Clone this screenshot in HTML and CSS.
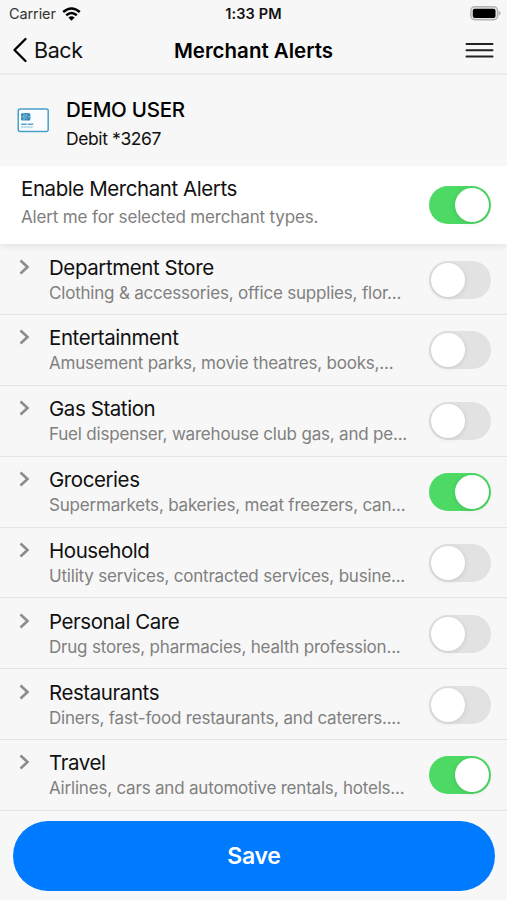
FILE: index.html
```html
<!DOCTYPE html>
<html lang="en">
<head>
    <meta charset="UTF-8">
    <meta name="viewport" content="width=device-width, initial-scale=1.0">
    <title>Merchant Alerts</title>
    <link rel="stylesheet" href="styles.css">
</head>
<body>
    <header>
        <div class="status-bar">
            <div class="carrier">
                <span>Carrier</span>
                <svg width="19" height="14" viewBox="0 0 19 14" fill="none" stroke="#000" stroke-width="2.5">
                    <path d="M1.2 5 Q9.5 -2 17.8 5"/>
                    <path d="M4.2 8.3 Q9.5 3.8 14.8 8.3"/>
                    <path d="M9.5 13.7 L6.4 10.6 Q9.5 8 12.6 10.6 Z" fill="#000" stroke="none"/>
                </svg>
            </div>
            <div class="time">1:33 PM</div>
            <svg class="battery" width="31" height="15" viewBox="0 0 31 15">
                <rect x="0.8" y="0.8" width="26.9" height="13" rx="4" fill="#e4e4e4" stroke="#b4b4b4" stroke-width="1.4"/>
                <rect x="2.8" y="2.7" width="22.7" height="9.2" rx="2" fill="#000"/>
                <path d="M28.8 5 Q30.6 5.6 30.6 7.3 Q30.6 9 28.8 9.6 Z" fill="#b4b4b4"/>
            </svg>
        </div>
        <nav class="nav-bar">
            <a class="back">
                <svg width="15" height="26" viewBox="0 0 15 26" fill="none" stroke="#000" stroke-width="2.3" stroke-linecap="round" stroke-linejoin="round">
                    <path d="M13.5 2 L2.5 13 L13.5 24"/>
                </svg>
                <span>Back</span>
            </a>
            <h1>Merchant Alerts</h1>
            <svg class="menu" width="29" height="16" viewBox="0 0 29 16" stroke="#222" stroke-width="2" stroke-linecap="round">
                <path d="M1.5 2 H27.5 M1.5 8.2 H27.5 M1.5 14.4 H27.5"/>
            </svg>
        </nav>
    </header>

    <section class="account">
        <svg width="32" height="25" viewBox="0 0 32 25">
            <rect x="1.2" y="1" width="30" height="22.6" rx="2" fill="#fafcfd" stroke="#4c9fc8" stroke-width="1.5"/>
            <rect x="4" y="5" width="9.4" height="7.6" rx="1.6" fill="#348dba"/>
            <path d="M4 8.8 H6.8 M10.8 8.8 H13.4 M7 5 V12.6 M10.4 6.8 H9 V11" fill="none" stroke="#a9d3e7" stroke-width="0.7"/>
            <path d="M4.2 16.2 H16.4" stroke="#5aa3c6" stroke-width="1.5" stroke-dasharray="5.5 1"/>
            <path d="M4.2 19 H16.4" stroke="#72b5d3" stroke-width="1.1" stroke-dasharray="2.4 0.6"/>
        </svg>
        <div>
            <h2>DEMO USER</h2>
            <p>Debit *3267</p>
        </div>
    </section>

    <section class="enable">
        <div>
            <h3>Enable Merchant Alerts</h3>
            <p>Alert me for selected merchant types.</p>
        </div>
        <span class="toggle on"></span>
    </section>

    <ul class="merchants">
        <li>
            <svg class="arrow" viewBox="0 0 11 16"><path d="M1.5 1.5 L8.5 8 L1.5 14.5"/></svg>
            <div class="info">
                <h3>Department Store</h3>
                <p>Clothing &amp; accessories, office supplies, flor...</p>
            </div>
            <span class="toggle"></span>
        </li>
        <li>
            <svg class="arrow" viewBox="0 0 11 16"><path d="M1.5 1.5 L8.5 8 L1.5 14.5"/></svg>
            <div class="info">
                <h3>Entertainment</h3>
                <p>Amusement parks, movie theatres, books,...</p>
            </div>
            <span class="toggle"></span>
        </li>
        <li>
            <svg class="arrow" viewBox="0 0 11 16"><path d="M1.5 1.5 L8.5 8 L1.5 14.5"/></svg>
            <div class="info">
                <h3>Gas Station</h3>
                <p>Fuel dispenser, warehouse club gas, and pe...</p>
            </div>
            <span class="toggle"></span>
        </li>
        <li>
            <svg class="arrow" viewBox="0 0 11 16"><path d="M1.5 1.5 L8.5 8 L1.5 14.5"/></svg>
            <div class="info">
                <h3>Groceries</h3>
                <p>Supermarkets, bakeries, meat freezers, can...</p>
            </div>
            <span class="toggle on"></span>
        </li>
        <li>
            <svg class="arrow" viewBox="0 0 11 16"><path d="M1.5 1.5 L8.5 8 L1.5 14.5"/></svg>
            <div class="info">
                <h3>Household</h3>
                <p>Utility services, contracted services, busine...</p>
            </div>
            <span class="toggle"></span>
        </li>
        <li>
            <svg class="arrow" viewBox="0 0 11 16"><path d="M1.5 1.5 L8.5 8 L1.5 14.5"/></svg>
            <div class="info">
                <h3>Personal Care</h3>
                <p>Drug stores, pharmacies, health profession...</p>
            </div>
            <span class="toggle"></span>
        </li>
        <li>
            <svg class="arrow" viewBox="0 0 11 16"><path d="M1.5 1.5 L8.5 8 L1.5 14.5"/></svg>
            <div class="info">
                <h3>Restaurants</h3>
                <p>Diners, fast-food restaurants, and caterers....</p>
            </div>
            <span class="toggle"></span>
        </li>
        <li>
            <svg class="arrow" viewBox="0 0 11 16"><path d="M1.5 1.5 L8.5 8 L1.5 14.5"/></svg>
            <div class="info">
                <h3>Travel</h3>
                <p>Airlines, cars and automotive rentals, hotels...</p>
            </div>
            <span class="toggle on"></span>
        </li>
    </ul>

    <footer>
        <button class="save-btn">Save</button>
    </footer>
</body>
</html>
```
FILE: styles.css
```css
* {
    box-sizing: border-box;
}
body {
    font-family: Inter, "Liberation Sans", sans-serif;
    margin: 0;
    height: 900px;
    background: #f7f7f7;
    color: #111;
    overflow: hidden;
}
h1, h2, h3, p, ul {
    margin: 0;
    padding: 0;
}
svg {
    display: block;
    flex-shrink: 0;
}
header {
    height: 75px;
    border-bottom: 2px solid #ececec;
}
.status-bar {
    display: grid;
    grid-template-columns: 1fr auto 1fr;
    align-items: center;
    height: 27px;
    padding: 0 6px 0 9px;
    font-size: 14.5px;
}
.carrier {
    display: flex;
    align-items: center;
    gap: 6px;
    color: #333;
    letter-spacing: -0.1px;
}
.time {
    font-weight: 600;
    font-size: 14.5px;
    letter-spacing: 0.1px;
    margin-right: 3px;
}
.battery {
    justify-self: end;
}
.nav-bar {
    display: grid;
    grid-template-columns: 1fr auto 1fr;
    align-items: center;
    height: 46px;
    padding: 0 12px;
}
.back {
    display: flex;
    align-items: center;
    gap: 7px;
    font-size: 21.5px;
    letter-spacing: -0.4px;
}
h1 {
    font-size: 20.5px;
    font-weight: 600;
    color: #000;
}
.menu {
    justify-self: end;
    margin-right: 1px;
}
.account {
    display: flex;
    align-items: center;
    gap: 17px;
    height: 91px;
    padding: 0 17px;
}
.account h2 {
    margin-top: 6px;
    font-size: 20.5px;
    line-height: 26px;
    font-weight: 500;
    letter-spacing: -0.25px;
    color: #000;
}
.account p {
    margin-top: 5px;
    font-size: 17.5px;
    line-height: 22px;
    letter-spacing: -0.4px;
}
.enable {
    display: flex;
    align-items: center;
    justify-content: space-between;
    height: 78px;
    padding: 0 16px 0 21px;
    background: #fff;
    box-shadow: 0 3px 6px rgba(0, 0, 0, 0.07);
}
h3 {
    font-size: 20.5px;
    line-height: 26px;
    font-weight: 400;
    letter-spacing: -0.43px;
}
.enable p, .info p {
    font-size: 17px;
    line-height: 22px;
    letter-spacing: -0.2px;
    color: #808080;
    white-space: nowrap;
}
.enable p {
    margin: 4px 0 7px;
    letter-spacing: -0.15px;
}
.merchants {
    list-style: none;
}
.merchants li {
    display: flex;
    align-items: center;
    height: 70.85px;
    padding: 0 16px 0 19px;
    border-bottom: 1px solid #e4e4e4;
}
.merchants li:first-child {
    height: 71px;
}
.arrow {
    width: 11px;
    height: 16px;
    margin: 0 19px 25px 0;
    fill: none;
    stroke: #8c8c8c;
    stroke-width: 2.6;
}
.info {
    flex: 1;
    min-width: 0;
}
.info h3 {
    line-height: 25px;
}
.info p {
    margin-top: 2px;
}
.toggle {
    display: flex;
    flex-shrink: 0;
    align-items: center;
    width: 62px;
    height: 38px;
    padding: 0 2px;
    border-radius: 19px;
    background: #e2e2e2;
}
.merchants .toggle {
    margin-top: 1px;
}
.toggle::before {
    content: "";
    width: 34px;
    height: 34px;
    border-radius: 50%;
    background: #fff;
    box-shadow: 0 1px 5px rgba(0, 0, 0, 0.12);
}
.toggle.on {
    justify-content: flex-end;
    background: #4cd964;
}
footer {
    padding: 10px 12px 0 13px;
}
.save-btn {
    display: block;
    width: 100%;
    height: 70px;
    border: none;
    border-radius: 35px;
    background: #007aff;
    color: #fff;
    font-family: inherit;
    font-size: 23px;
    font-weight: 600;
    letter-spacing: -0.3px;
}
```
